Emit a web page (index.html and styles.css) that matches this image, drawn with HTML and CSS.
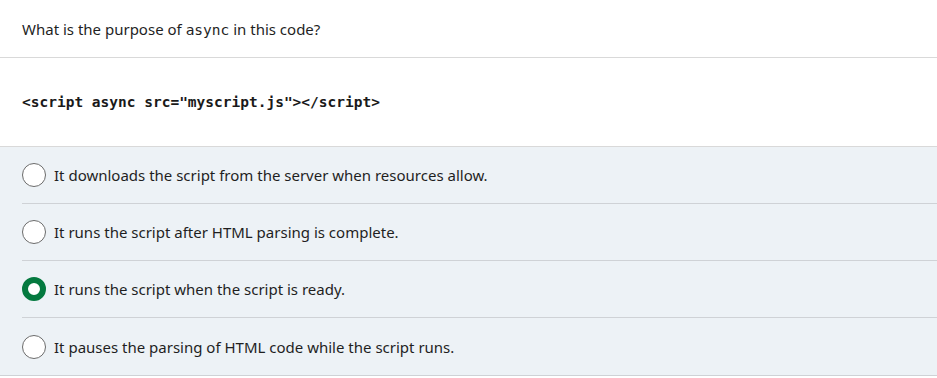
FILE: index.html
```html
<!DOCTYPE html>
<html>
<head>
<meta charset="utf-8">
<link rel="stylesheet" href="styles.css">
</head>
<body>
<div class="quiz">
  <div class="question"><span>What is the purpose of <code class="inline">async</code> in this code?</span></div>
  <div class="code"><code>&lt;script async src="myscript.js"&gt;&lt;/script&gt;</code></div>
  <ul class="options">
    <li class="option"><span class="radio"></span><span class="label">It downloads the script from the server when resources allow.</span></li>
    <li class="option"><span class="radio"></span><span class="label">It runs the script after HTML parsing is complete.</span></li>
    <li class="option"><span class="radio checked"></span><span class="label">It runs the script when the script is ready.</span></li>
    <li class="option last"><span class="radio"></span><span class="label">It pauses the parsing of HTML code while the script runs.</span></li>
  </ul>
</div>
</body>
</html>
```
FILE: styles.css
```css
* { box-sizing: border-box; }
html, body { margin: 0; padding: 0; background: #fff; }
body {
  font-family: "Noto Sans", "Open Sans", sans-serif;
  font-size: 15px;
  color: #1f1f1f;
}
.quiz { width: 937px; }
.question {
  height: 58px;
  padding: 0 22px;
  display: flex;
  align-items: center;
  border-bottom: 1px solid #d9d9d9;
}
.inline {
  font-family: "DejaVu Sans Mono", "Liberation Mono", monospace;
  font-size: 14.5px;
}
.code {
  height: 89px;
  padding: 0 22px;
  display: flex;
  align-items: center;
  border-bottom: 1px solid #d9d9d9;
}
.code code {
  font-family: "DejaVu Sans Mono", "Liberation Mono", monospace;
  font-weight: bold;
  font-size: 14.5px;
  color: #1a1a1a;
}
.options {
  list-style: none;
  margin: 0;
  padding: 0;
  background: #edf2f6;
}
.option {
  height: 57px;
  display: flex;
  align-items: center;
  gap: 8px;
  margin-left: 22px;
  border-bottom: 1px solid #cfd2d6;
}
.option.last {
  margin-left: 0;
  padding-left: 22px;
  height: 58px;
  padding-top: 1px;
}
.radio {
  width: 24px;
  height: 24px;
  border-radius: 50%;
  border: 1.5px solid #6b6b6b;
  background: #fff;
  flex: none;
}
.radio.checked {
  border: 6px solid #04793f;
  background: #fff;
}
.label { line-height: 20px; }
```
